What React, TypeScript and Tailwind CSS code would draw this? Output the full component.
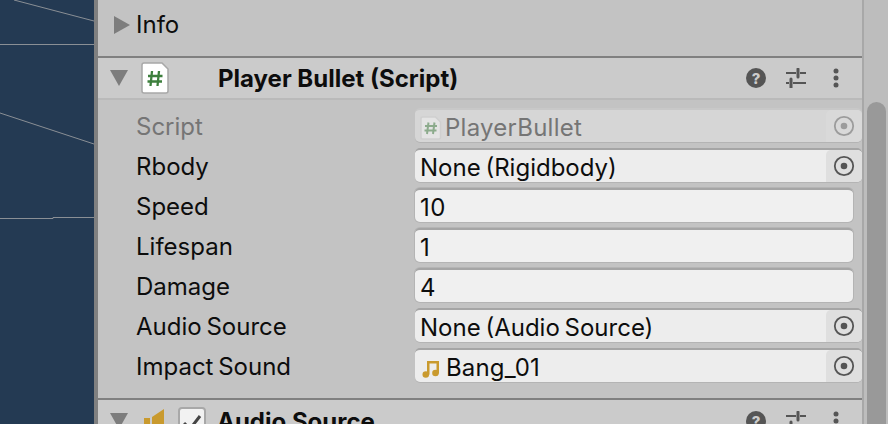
import React from "react";

const font = { fontFamily: "Inter, 'Noto Sans', sans-serif" };

function Target({ dim }: { dim?: boolean }) {
  const c = dim ? "#9c9c9c" : "#555555";
  return (
    <svg width="22" height="22" viewBox="0 0 22 22">
      <circle cx="11" cy="11" r="9.2" fill="none" stroke={c} strokeWidth="1.8" />
      <circle cx="11" cy="11" r="3.3" fill={c} />
    </svg>
  );
}

function ScriptIcon({ small }: { small?: boolean }) {
  if (small) {
    return (
      <svg width="22" height="24" viewBox="0 0 22 24" className="shrink-0">
        <path d="M2.5 1h13l5 5v15.5a1.5 1.5 0 0 1-1.5 1.5H2.500A1.500 1.500 0 0 1 1 21.500V2.500A1.500 1.500 0 0 1 2.500 1z" fill="#e4e4e4" stroke="#cfcfcf" strokeWidth="1.500" />
        <path d="M8.500 6.500 7 18M14.500 6.500 13 18M5 10h12M4.500 14.500h12" stroke="#8cab8c" strokeWidth="2" fill="none" />
      </svg>
    );
  }
  return (
    <svg width="28" height="32" viewBox="0 0 28 32" className="shrink-0">
      <path d="M3 1h18l6 6v22a2 2 0 0 1-2 2H3a2 2 0 0 1-2-2V3a2 2 0 0 1 2-2z" fill="#ffffff" stroke="#a8a8a8" strokeWidth="1.500" />
      <path d="M11 9 9.500 24M18 9l-1.500 15M7 14h14.500M6.500 19.500H21" stroke="#3d7f3d" strokeWidth="2.300" fill="none" />
    </svg>
  );
}

function HeaderTools() {
  return (
    <div className="ml-auto flex items-center">
      <svg width="20" height="20" viewBox="0 0 20 20">
        <circle cx="10" cy="10" r="10" fill="#555555" />
        <text x="10" y="15.500" textAnchor="middle" fontSize="15" fontWeight="800" fill="#cbcbcb" style={font}>?</text>
      </svg>
      <svg width="20" height="20" viewBox="0 0 20 20" className="ml-[20px]" stroke="#555555" fill="none">
        <path d="M0 5h10M14 5h6M0 15h3M7 15h13" strokeWidth="2" />
        <path d="M12 1v8M5 11v9" strokeWidth="3" strokeLinecap="round" />
      </svg>
      <svg width="6" height="20" viewBox="0 0 6 20" className="ml-[27px] mr-[23px]" fill="#555555">
        <circle cx="3" cy="3" r="2.500" />
        <circle cx="3" cy="10" r="2.500" />
        <circle cx="3" cy="17" r="2.500" />
      </svg>
    </div>
  );
}

function Row({ label, dim, children }: { label: string; dim?: boolean; children: React.ReactNode }) {
  return (
    <div className="flex h-[40px] items-center">
      <div className={`w-[287px] shrink-0 pl-[8px] pt-[4px] text-[24px] ${dim ? "text-[#757575]" : "text-[#0d0d0d]"}`}>{label}</div>
      {children}
    </div>
  );
}

function Field({ value }: { value: string }) {
  return (
    <div className="flex h-[34px] w-[438px] items-center rounded-[5px] border-t-2 border-[#a5a5a5] bg-[#f0f0f0] pl-[5px] pt-[4px] text-[24px] tracking-[0.5px] text-[#0d0d0d] shadow-[0_0_0_1px_#b4b4b4]">
      {value}
    </div>
  );
}

function ObjectField({ children, dim }: { children: React.ReactNode; dim?: boolean }) {
  return (
    <div className={`flex h-[34px] w-[447px] items-center rounded-[5px] border-t-2 pl-[5px] text-[24px] shadow-[0_1px_0_0_#b4b4b4] ${dim ? "border-[#c8c8c8] bg-[#d6d6d6] text-[#757575]" : "border-[#a5a5a5] bg-[#ededed] text-[#0d0d0d]"}`}>
      <div className="flex min-w-0 flex-1 items-center gap-[3px] pt-[4px]">{children}</div>
      <div className={`flex h-full w-[36px] items-center justify-center rounded-r-[5px] rounded-tl-[5px] ${dim ? "bg-[#d9d9d9]" : "bg-[#dfdfdf]"}`}>
        <Target dim={dim} />
      </div>
    </div>
  );
}

export default function App() {
  return (
    <div className="flex h-[424px] w-[888px] overflow-hidden [word-spacing:-2px]" style={font}>
      <div className="relative h-full w-[94px] shrink-0 bg-[#243a53]">
        <svg width="94" height="424" className="absolute inset-0" stroke="#8a8f95" strokeWidth="1" fill="none">
          <path d="M14 0 94 21" />
          <path d="M0 44.500H94" />
          <path d="M0 113 94 144" />
          <path d="M0 218.500H53L53 217.500H94" />
        </svg>
      </div>
      <div className="h-full w-[4px] shrink-0 bg-[#808080]" />
      <div className="flex h-full w-[764px] shrink-0 flex-col overflow-hidden bg-[#c3c3c3]">
        <div className="flex h-[56px] shrink-0 items-center pb-[6px] pl-[16px] text-[24px] text-[#0d0d0d]">
          <svg width="16" height="18" viewBox="0 0 16 18" fill="#7d7d7d" className="mr-[6px]">
            <path d="M0 0 16 9 0 18z" />
          </svg>
          Info
        </div>
        <div className="flex h-[44px] shrink-0 items-center border-t-2 border-b-2 border-t-[#808080] border-b-[#bababa] bg-[#cbcbcb] pl-[12px]">
          <svg width="18" height="16" viewBox="0 0 18 16" fill="#7d7d7d" className="mr-[13px]">
            <path d="M0 0H18L9 16z" />
          </svg>
          <ScriptIcon />
          <div className="ml-[49px] pt-[2px] text-[24px] font-bold text-[#0d0d0d] [word-spacing:0px]">Player Bullet (Script)</div>
          <HeaderTools />
        </div>
        <div className="flex shrink-0 flex-col pl-[30px] pt-[5px]">
          <Row label="Script" dim>
            <ObjectField dim>
              <ScriptIcon small />
              <span className="tracking-[0.25px]">PlayerBullet</span>
            </ObjectField>
          </Row>
          <Row label="Rbody">
            <ObjectField>None (Rigidbody)</ObjectField>
          </Row>
          <Row label="Speed">
            <Field value="10" />
          </Row>
          <Row label="Lifespan">
            <Field value="1" />
          </Row>
          <Row label="Damage">
            <Field value="4" />
          </Row>
          <Row label="Audio Source">
            <ObjectField>None (Audio Source)</ObjectField>
          </Row>
          <Row label="Impact Sound">
            <ObjectField>
              <svg width="18" height="20" viewBox="0 0 18 20" fill="#c99a2e" className="ml-[2px] mr-[3px] shrink-0">
                <path d="M5 3h12v12.500h-2.500V5.500H7.500v11H5z" />
                <circle cx="3.800" cy="16.500" r="3.300" />
                <circle cx="13.500" cy="15" r="3.300" />
              </svg>
              <span className="tracking-[0.15px]">Bang_01</span>
            </ObjectField>
          </Row>
        </div>
        <div className="mt-[13px] flex h-[44px] shrink-0 items-center border-t-2 border-t-[#808080] bg-[#cbcbcb] pl-[12px]">
          <svg width="18" height="16" viewBox="0 0 18 16" fill="#7d7d7d" className="mr-[15px]">
            <path d="M0 0H18L9 16z" />
          </svg>
          <svg width="22" height="26" viewBox="0 0 20 26" fill="#c99a2e" className="mr-[13px] shrink-0">
            <path d="M0 10h6v16H0zM8 9l12-8v25H8z" />
          </svg>
          <div className="mr-[11px] flex h-[28px] w-[28px] items-end justify-center rounded-[4px] border-2 border-[#a8a8a8] bg-[#f2f2f2]">
            <svg width="22" height="20" viewBox="0 0 22 20" fill="none" stroke="#454545" strokeWidth="3">
              <path d="M3 10l6 6L19 3" />
            </svg>
          </div>
          <div className="pt-[2px] text-[24px] font-bold text-[#0d0d0d] [word-spacing:0px]">Audio Source</div>
          <HeaderTools />
        </div>
      </div>
      <div className="flex h-full w-[26px] shrink-0 flex-col border-l-2 border-[#a8a8a8] bg-[#bdbdbd] pl-[3px] pr-[2px] pt-[102px]">
        <div className="h-full rounded-t-[10px] bg-[#999999]" />
      </div>
    </div>
  );
}
